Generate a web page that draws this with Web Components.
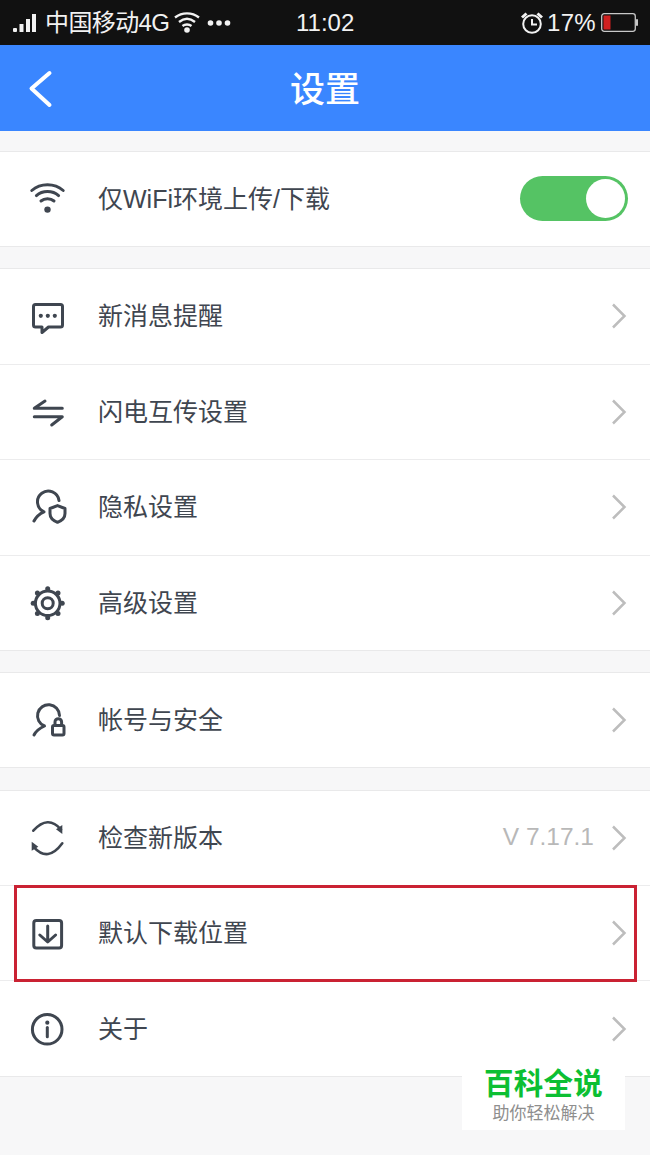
<!DOCTYPE html>
<html>
<head>
<meta charset="utf-8">
<style>
  html, body { margin: 0; background: #f7f7f8; }
  body { width: 650px; height: 1155px; overflow: hidden; position: relative; font-family: "Liberation Sans", "Noto Sans CJK SC", sans-serif; }
</style>
</head>
<body>
<status-bar></status-bar>
<nav-bar>设置</nav-bar>
<settings-group style="margin-top:20px">
  <settings-row label="仅WiFi环境上传/下载" icon="wifi" toggle></settings-row>
</settings-group>
<settings-group style="margin-top:21px">
  <settings-row label="新消息提醒" icon="message"></settings-row>
  <settings-row label="闪电互传设置" icon="swap"></settings-row>
  <settings-row label="隐私设置" icon="privacy"></settings-row>
  <settings-row label="高级设置" icon="gear" last style="height:94.5px"></settings-row>
</settings-group>
<settings-group style="margin-top:21px">
  <settings-row label="帐号与安全" icon="lock" last style="height:94px"></settings-row>
</settings-group>
<settings-group style="margin-top:22px">
  <settings-row label="检查新版本" icon="sync" value="V 7.17.1" style="height:95px"></settings-row>
  <settings-row label="默认下载位置" icon="download" style="height:95px"></settings-row>
  <settings-row label="关于" icon="info" last style="height:95px"></settings-row>
</settings-group>
<red-box></red-box>
<water-mark></water-mark>

<script>
const ink = "#3f4650";
const icons = {
  wifi: `<path d="M3.8 11.5C12.5 3.8 26.5 3.8 35.2 11.5M8.4 16.6C14.5 11.2 24.5 11.2 30.6 16.6M13 22C16.5 19 22.5 19 26 22"/><circle cx="19.5" cy="30.6" r="3.2" fill="${ink}" stroke="none"/>`,
  message: `<path d="M7.5 8.5H32.5A2 2 0 0 1 34.5 10.5V29A2 2 0 0 1 32.5 31H20.5L14 36.5V31H7.5A2 2 0 0 1 5.5 29V10.5A2 2 0 0 1 7.5 8.5Z"/><circle cx="12.8" cy="19.8" r="2.1" fill="${ink}" stroke="none"/><circle cx="19.8" cy="19.8" r="2.1" fill="${ink}" stroke="none"/><circle cx="26.8" cy="19.8" r="2.1" fill="${ink}" stroke="none"/>`,
  swap: `<path d="M17 9L6.3 16.3H34.3M6.3 24.7H34.3L23.7 33"/>`,
  privacy: `<path d="M6 34C8 30 11.5 26.8 16 24.8A10.8 10.8 0 1 1 31 13.5"/><path d="M29.5 18.6L37 21.5V26.5C37 30.5 33.5 33.8 29.5 35.3C25.5 33.8 22 30.5 22 26.5V21.5Z"/>`,
  gear: `<circle cx="19.7" cy="20.3" r="12.3"/><circle cx="19.7" cy="20.3" r="5.5"/><g fill="${ink}" stroke="none"><circle cx="19.7" cy="5.8" r="2.5"/><circle cx="19.7" cy="34.8" r="2.5"/><circle cx="5.2" cy="20.3" r="2.5"/><circle cx="34.2" cy="20.3" r="2.5"/><circle cx="9.4" cy="10" r="2.5"/><circle cx="30" cy="10" r="2.5"/><circle cx="9.4" cy="30.6" r="2.5"/><circle cx="30" cy="30.6" r="2.5"/></g>`,
  lock: `<path d="M6 35C8 31 12 28 16.5 26A11 11 0 1 1 31.5 15.5"/><rect x="24.5" y="25.5" width="11.5" height="9.5" rx="1.5"/><path d="M27 25V22A3.3 3.3 0 0 1 33.6 22V25"/>`,
  sync: `<path d="M5.3 12.7Q20 -3.5 33 11.5" stroke-width="2.6"/><path d="M34.3 25.3Q20 44.7 6 29.3" stroke-width="2.6"/><path d="M34.3 7V16L28 11.3Z" fill="${ink}" stroke="none"/><path d="M3.7 23.7V32.7L10.3 28.7Z" fill="${ink}" stroke="none"/>`,
  download: `<rect x="5.8" y="7.5" width="27.8" height="27.5" rx="2.5"/><path d="M19.7 13V28.2M11.8 22L19.7 29L27.6 22"/>`,
  info: `<circle cx="19.2" cy="20.3" r="14.8"/><path d="M19.3 18.5V27.8"/><circle cx="19.3" cy="13.7" r="2.1" fill="${ink}" stroke="none"/>`
};

class StatusBar extends HTMLElement {
  connectedCallback() {
    this.attachShadow({mode: "open"});
    this.shadowRoot.innerHTML = `
      <style>
      :host { display: flex; align-items: center; height: 45px; background: #111; color: #f2f2f2; font-size: 24px; position: relative; font-family: "Liberation Sans", "Noto Sans CJK SC", sans-serif; }
      .left { display: flex; align-items: center; padding-left: 12px; }
      .carrier { margin: 0 0 4px 8px; letter-spacing: -.6px; white-space: nowrap; }
      .clock { position: absolute; left: 296px; top: 8px; line-height: 30px; }
      .right { position: absolute; right: 12px; top: 0; height: 45px; display: flex; align-items: center; }
      svg { display: block; }
      </style>
      <div class="left">
        <svg width="25" height="20" viewBox="0 0 25 20"><g fill="#f2f2f2"><rect x="1" y="15" width="4" height="4" rx="1"/><rect x="7.5" y="11" width="4" height="8"/><rect x="14" y="6" width="4" height="13"/><rect x="20" y="1" width="4" height="18"/></g></svg>
        <span class="carrier">中国移动4G</span>
        <svg style="margin:0 0 1px 4px" width="28" height="22" viewBox="0 0 28 22" fill="none" stroke="#f2f2f2" stroke-width="2.4"><path d="M2 6.5C9 1 19 1 26 6.5M6 11C11 7 17 7 22 11M9.5 15C12 13 16 13 18.5 15"/><circle cx="14" cy="19" r="2.8" fill="#f2f2f2" stroke="none"/></svg>
        <svg style="margin-left:6px" width="24" height="6" viewBox="0 0 24 6"><g fill="#f2f2f2"><circle cx="3.5" cy="3" r="2.8"/><circle cx="12" cy="3" r="2.8"/><circle cx="20.5" cy="3" r="2.8"/></g></svg>
      </div>
      <span class="clock">11:02</span>
      <div class="right">
        <svg width="24" height="24" viewBox="0 0 24 24" fill="none" stroke="#f2f2f2" stroke-width="2"><circle cx="12" cy="13" r="8.8"/><path d="M12 8V13.5H17"/><path d="M2 6.5L6.5 2.5M22 6.5L17.5 2.5" stroke-width="3"/></svg>
        <span style="margin-left:3px;letter-spacing:.3px">17%</span>
        <svg style="margin-left:5px" width="37" height="19" viewBox="0 0 37 19"><rect x=".7" y=".7" width="33.6" height="17.6" rx="2.5" fill="none" stroke="#c8c8c8" stroke-width="1.3"/><rect x="2.5" y="2.5" width="7" height="14" fill="#d0201f"/><rect x="35" y="6" width="2" height="7" rx="1" fill="#c8c8c8"/></svg>
      </div>`;
  }
}

class NavBar extends HTMLElement {
  connectedCallback() {
    this.attachShadow({mode: "open"});
    this.shadowRoot.innerHTML = `
      <style>
      :host { display: flex; align-items: center; justify-content: center; height: 86px; background: #3a86ff; color: #fff; font-size: 35px; position: relative; font-family: "Liberation Sans", "Noto Sans CJK SC", sans-serif; font-weight: 500; }
      span { margin-bottom: 3px; }
      svg { position: absolute; left: 28px; top: 25px; }
      </style>
      <svg width="26" height="38" viewBox="0 0 26 38" fill="none" stroke="#fff" stroke-width="4" stroke-linecap="round" stroke-linejoin="round"><path d="M21.5 3L3.5 18.5L21.5 35"/></svg>
      <span><slot></slot></span>`;
  }
}

class SettingsGroup extends HTMLElement {
  connectedCallback() {
    this.attachShadow({mode: "open"});
    this.shadowRoot.innerHTML = `
      <style>
      :host { display: block; background: #fff; border-top: 1px solid #e9e9ea; border-bottom: 1px solid #e9e9ea; }
      </style>
      <slot></slot>`;
  }
}

class ToggleSwitch extends HTMLElement {
  connectedCallback() {
    this.attachShadow({mode: "open"});
    this.shadowRoot.innerHTML = `
      <style>
      :host { display: flex; justify-content: flex-end; align-items: center; box-sizing: border-box; width: 108px; height: 45px; margin-bottom: 2px; padding: 3px; border-radius: 23px; background: #55c364; }
      div { width: 39px; height: 39px; border-radius: 50%; background: #fff; }
      </style>
      <div></div>`;
  }
}

class RowChevron extends HTMLElement {
  connectedCallback() {
    this.attachShadow({mode: "open"});
    this.shadowRoot.innerHTML = `
      <style>
      :host { display: block; width: 16px; height: 26px; }
      svg { display: block; }
      </style>
      <svg width="16" height="26" viewBox="0 0 16 26" fill="none" stroke="#bdbdbd" stroke-width="2.5"><path d="M2 1.5L13.5 13L2 24.5"/></svg>`;
  }
}

class SettingsRow extends HTMLElement {
  connectedCallback() {
    this.attachShadow({mode: "open"});
    let value = this.getAttribute("value");
    let right = this.hasAttribute("toggle")
      ? `<toggle-switch></toggle-switch>`
      : `${value ? `<span class="value">${value}</span>` : ""}<row-chevron></row-chevron>`;
    this.shadowRoot.innerHTML = `
      <style>
      :host { display: flex; align-items: center; box-sizing: border-box; height: 95.5px; background: #fff; padding-left: 28px; color: ${ink}; }
      :host(:not([last]):not([toggle])) { border-bottom: 1px solid #ececed; }
      :host([toggle]) { height: 94px; }
      svg.icon { display: block; flex: none; width: 40px; height: 40px; }
      .label { margin: 0 0 4px 30px; font-size: 25px; white-space: nowrap; }
      .right { margin-left: auto; display: flex; align-items: center; padding-right: 23px; }
      :host([toggle]) .right { padding-right: 22px; }
      .value { margin: 0 17px 2px 0; font-size: 24.5px; color: #b8b8b8; font-family: "Liberation Sans", sans-serif; }
      </style>
      <svg class="icon" viewBox="0 0 40 40" fill="none" stroke="${ink}" stroke-width="3" stroke-linecap="round" stroke-linejoin="round">${icons[this.getAttribute("icon")]}</svg>
      <span class="label">${this.getAttribute("label")}</span>
      <div class="right">${right}</div>`;
  }
}

class RedBox extends HTMLElement {
  connectedCallback() {
    this.attachShadow({mode: "open"});
    this.shadowRoot.innerHTML = `
      <style>
      :host { position: absolute; left: 14px; top: 885px; width: 623px; height: 97px; box-sizing: border-box; border: 3px solid #ca2233; }
      </style>`;
  }
}

class WaterMark extends HTMLElement {
  connectedCallback() {
    this.attachShadow({mode: "open"});
    this.shadowRoot.innerHTML = `
      <style>
      :host { position: absolute; left: 462px; top: 1060px; width: 163px; height: 70px; background: #fff; display: flex; flex-direction: column; align-items: center; font-family: "Liberation Sans", "Noto Sans CJK SC", sans-serif; }
      .big { font-size: 29.5px; line-height: 34px; margin-top: 7px; font-weight: 700; color: #0cbf33; letter-spacing: .3px; }
      .small { font-size: 17px; line-height: 22px; margin-top: 2px; color: #8e8e8e; }
      </style>
      <span class="big">百科全说</span>
      <span class="small">助你轻松解决</span>`;
  }
}

customElements.define("status-bar", StatusBar);
customElements.define("nav-bar", NavBar);
customElements.define("settings-group", SettingsGroup);
customElements.define("toggle-switch", ToggleSwitch);
customElements.define("row-chevron", RowChevron);
customElements.define("settings-row", SettingsRow);
customElements.define("red-box", RedBox);
customElements.define("water-mark", WaterMark);
</script>
</body>
</html>
